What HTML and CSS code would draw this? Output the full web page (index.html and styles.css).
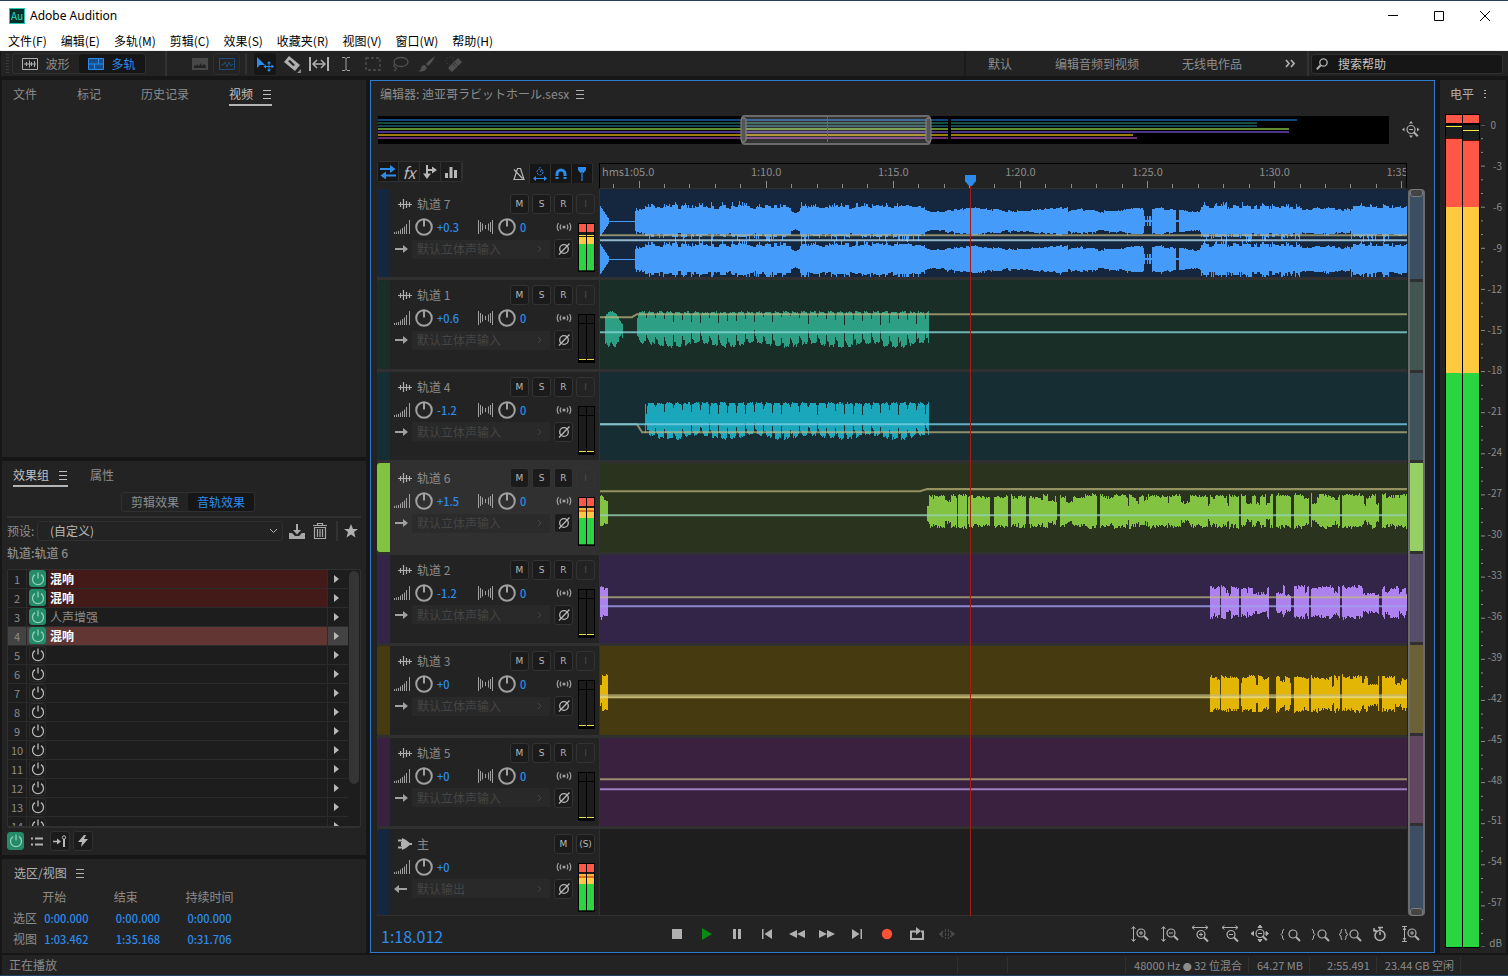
FILE: index.html
```html
<!DOCTYPE html>
<html lang="zh-CN">
<head>
    <meta charset="UTF-8">
    <meta name="viewport" content="width=device-width, initial-scale=1.0">
    <title>Adobe Audition</title>
    <link rel="stylesheet" href="styles.css">
</head>
<body>
    <svg class="sprite" aria-hidden="true">
        <symbol id="i-burger" viewBox="0 0 10 10"><path d="M1 1.500h8M1 5.500h8M1 9.500h8" stroke="currentColor" fill="none"/></symbol>
        <symbol id="i-power" viewBox="0 0 18 18"><path d="M6 4.600a5.500 5.500 0 1 0 6 0M9 2.500v6" stroke="currentColor" stroke-width="1.300" fill="none"/></symbol>
        <symbol id="i-clip" viewBox="0 0 16 12"><path d="M1 6.500h14M3.500 4v5M6.500 1v10M9.500 3v7M12.500 4v5" stroke="currentColor" stroke-width="1.200" fill="none"/></symbol>
        <symbol id="i-bus" viewBox="0 0 16 14"><path d="M1 3.500h5M1 10.500h5M8 7h7" stroke="currentColor" stroke-width="2" fill="none"/><path d="M5 1l4 2 5 4-5 4-4 2V9h-1V5h1z" fill="currentColor"/></symbol>
        <symbol id="i-volume" viewBox="0 0 17 16"><path d="M.5 13v2M2.500 12.500v2.500M4.500 12v3M6.500 10.500v4.500M8.500 9v6M10.500 7.500v7.500M12.500 5v10M15.500 1v14" stroke="currentColor" fill="none"/></symbol>
        <symbol id="i-stereo" viewBox="0 0 17 16"><path d="M1.500 1v14M3.500 3v10M5.500 4.500v7M8.500 6v4M11.500 4.500v7M13.500 3v10M15.500 1v14" stroke="currentColor" fill="none"/></symbol>
        <symbol id="i-knob" viewBox="0 0 18 18"><circle cx="9" cy="9" r="7.800" stroke="currentColor" stroke-width="2" fill="none"/><path d="M9 1.500v7" stroke="currentColor" stroke-width="2"/></symbol>
        <symbol id="i-monitor" viewBox="0 0 16 10"><circle cx="8" cy="5" r="1.600" fill="currentColor"/><path d="M5 2.500q-1.700 2.500 0 5M11 2.500q1.700 2.500 0 5M2.500 1q-2.500 4 0 8M13.500 1q2.500 4 0 8" stroke="currentColor" stroke-width="1.200" fill="none"/></symbol>
        <symbol id="i-in" viewBox="0 0 14 10"><path d="M1 5h9" stroke="currentColor" stroke-width="2"/><path d="M9 1l5 4-5 4z" fill="currentColor"/></symbol>
        <symbol id="i-out" viewBox="0 0 14 10"><path d="M4 5h9" stroke="currentColor" stroke-width="2"/><path d="M5 1L0 5l5 4z" fill="currentColor"/></symbol>
        <symbol id="i-phase" viewBox="0 0 14 14"><circle cx="7" cy="7" r="4.300" stroke="currentColor" stroke-width="1.300" fill="none"/><path d="M2 12.500L12.500 1.500" stroke="currentColor" stroke-width="1.300"/></symbol>
        <symbol id="i-more" viewBox="0 0 6 8"><path d="M1 1l3 3-3 3" stroke="currentColor" fill="none"/></symbol>
        <symbol id="i-play" viewBox="0 0 6 10"><path d="M0 1l5 4-5 4z" fill="currentColor"/></symbol>
        <symbol id="i-lens" viewBox="0 0 12 12"><circle cx="4.500" cy="4.500" r="3.700" stroke="currentColor" stroke-width="1.300" fill="none"/><path d="M7.300 7.300l3.900 3.900" stroke="currentColor" stroke-width="2"/></symbol>
        <symbol id="i-fit" viewBox="0 0 18 18"><circle cx="9" cy="8.500" r="4" stroke="currentColor" stroke-width="1.200" fill="none"/><path d="M7 8.500h4" stroke="currentColor"/><path d="M11.800 11.300l4 4" stroke="currentColor" stroke-width="2"/><path d="M9 0l2 2.500H7zM9 17l-2-2.500h4zM0 8.500l2.500-2v4zM17.500 8.500l-2.500-2v4z" fill="currentColor"/></symbol>
    </svg>

    <header class="titlebar">
        <div class="titlebar-app">
            <span class="app-logo">Au</span>
            <h1 class="app-name">Adobe Audition</h1>
        </div>
        <div class="window-buttons">
            <button aria-label="最小化"><svg width="10" height="10"><path d="M0 4.500h10" stroke="#000"/></svg></button>
            <button aria-label="最大化"><svg width="10" height="10"><path d="M.5.5h9v9h-9z" stroke="#000" fill="none"/></svg></button>
            <button aria-label="关闭"><svg width="10" height="10"><path d="M0 0l10 10M10 0L0 10" stroke="#000"/></svg></button>
        </div>
    </header>
    <nav class="menubar">
        <button>文件(F)</button>
        <button>编辑(E)</button>
        <button>多轨(M)</button>
        <button>剪辑(C)</button>
        <button>效果(S)</button>
        <button>收藏夹(R)</button>
        <button>视图(V)</button>
        <button>窗口(W)</button>
        <button>帮助(H)</button>
    </nav>

    <div class="toolbar">
        <span class="grip"></span>
        <div class="toggle mode-toggle">
            <button><svg width="16" height="12"><path d="M.5.5h15v11H.5zM2 6h12M4.500 4v4M7.500 2.500v7M9.500 4v4M12.500 3v6" stroke="currentColor" fill="none"/></svg>波形</button>
            <button class="on"><svg width="16" height="12"><path d="M.5.5h15v11H.5z" fill="#174f8c" stroke="currentColor"/><path d="M1 6h14M6.500 6v5M10.500 1v5" stroke="currentColor"/></svg>多轨</button>
        </div>
        <span class="divider mode-divider"></span>
        <div class="view-tools">
            <button class="tool dim" aria-label="频谱"><svg width="16" height="12"><path d="M0 0h16v12H0z" fill="#484848"/><path d="M2 10V7l2 1 1-2 2 2 2-3 1 3 2-2 2 2v2z" fill="#232323"/></svg></button>
            <button class="tool boxed" aria-label="音高"><svg width="16" height="12"><path d="M.5.5h15v11H.5zM2 7h2l2-3 2 5 2-5 2 4 2-2" stroke="#1f4f80" fill="none"/></svg></button>
        </div>
        <span class="divider"></span>
        <div class="edit-tools">
            <button class="tool active" aria-label="移动"><svg width="18" height="16"><path d="M1 1v11l3-3h5z" fill="#2d8ceb"/><path d="M13 6v9M8.500 10.500h9" stroke="#2d8ceb"/><path d="M13 5l2 2.500h-4zM13 16l2-2.500h-4zM7.500 10.500L10 8.500v4zM18 10.500l-2.500-2v4z" fill="#2d8ceb"/></svg></button>
            <button class="tool" aria-label="切断所选剪辑"><svg width="18" height="18"><path d="M6 1l11 9-5 6L1 7z" fill="#b0b0b0"/><path d="M5 6l2-1 5 5-2 1z" fill="#232323"/><path d="M18 18h-4l4-4z" fill="#8c8c8c"/></svg></button>
            <button class="tool" aria-label="滑动"><svg width="20" height="16"><path d="M1 1v14M19 1v14" stroke="#b0b0b0" stroke-width="2"/><path d="M4 8h12M8 4L4 8l4 4M12 4l4 4-4 4" stroke="#b0b0b0" stroke-width="1.500" fill="none"/></svg></button>
            <button class="tool" aria-label="时间选择"><svg width="10" height="16"><path d="M1 1.500h3l1 1 1-1h3M5 2v12M1 14.500h3l1-1 1 1h3" stroke="#a0a0a0" fill="none"/></svg></button>
            <button class="tool" aria-label="框选"><svg width="16" height="14"><path d="M1 1h14v12H1z" stroke="#505050" stroke-width="1.300" stroke-dasharray="3 2" fill="none"/></svg></button>
            <button class="tool" aria-label="套索"><svg width="18" height="16"><ellipse cx="10" cy="6" rx="7" ry="4.500" stroke="#505050" stroke-width="1.300" fill="none"/><path d="M4 8q-3 2 0 3t-1 4" stroke="#505050" stroke-width="1.300" fill="none"/></svg></button>
            <button class="tool" aria-label="画笔"><svg width="18" height="16"><path d="M17 0q-6 4-9 8l2 2Q15 6 17 0z" fill="#505050"/><path d="M7 9q-4 0-4 4-1 2-3 2 6 2 9-3z" fill="#505050"/></svg></button>
            <button class="tool" aria-label="污点修复"><svg width="18" height="16"><path d="M3 12L13 2l4 4L7 16z" fill="#505050"/><path d="M8 8l3 3M9 6l4 4" stroke="#232323" stroke-dasharray="1 1"/><circle cx="5" cy="5" r="4" stroke="#505050" stroke-dasharray="1 2" fill="none"/></svg></button>
        </div>
        <div class="workspaces">
            <button>默认</button>
            <button>编辑音频到视频</button>
            <button>无线电作品</button>
            <button aria-label="更多工作区"><svg width="10" height="9"><path d="M1 1l3 3.500L1 8M6 1l3 3.500L6 8" stroke="#b0b0b0" stroke-width="1.700" fill="none"/></svg></button>
        </div>
        <label class="search">
            <svg class="search-icon" width="12" height="12"><use href="#i-lens"/></svg>
            <input type="text" placeholder="搜索帮助" aria-label="搜索帮助">
        </label>
    </div>

    <main class="workspace">
        <aside class="sidebar">
            <section class="panel media">
                <div class="tabs media-tabs">
                    <button>文件</button>
                    <button>标记</button>
                    <button>历史记录</button>
                    <button class="current">视频 <svg width="10" height="10"><use href="#i-burger"/></svg></button>
                </div>
            </section>

            <section class="panel effects">
                <div class="tabs effects-tabs">
                    <button class="current">效果组 <svg width="10" height="10"><use href="#i-burger"/></svg></button>
                    <button>属性</button>
                </div>
                <div class="toggle effects-toggle">
                    <button>剪辑效果</button>
                    <button class="on">音轨效果</button>
                </div>
                <div class="preset">
                    <label for="preset">预设:</label>
                    <span class="preset-select">
                        <select id="preset"><option>(自定义)</option></select>
                        <svg width="9" height="6"><path d="M1 1l3.500 3.500L8 1" stroke="#b0b0b0" fill="none"/></svg>
                    </span>
                    <button aria-label="保存预设"><svg width="16" height="15"><path d="M0 9h3l3 3h4l3-3h3v6H0z" fill="#a8a8a8"/><path d="M8 0v8" stroke="#a8a8a8" stroke-width="2"/><path d="M4 6h8l-4 4.500z" fill="#a8a8a8"/></svg></button>
                    <button aria-label="删除预设"><svg width="14" height="16"><path d="M0 2.500h14M4.500 2V.5h5V2M1.500 4.500v11h11v-11zM4.500 6v8M7 6v8M9.500 6v8" stroke="#a8a8a8" stroke-width="1.200" fill="none"/></svg></button>
                    <span class="divider"></span>
                    <button aria-label="收藏"><svg width="14" height="14"><path d="M7 0l2 5h5l-4 3 1.500 5.500L7 10.500l-4.500 3L4 8 0 5h5z" fill="#b0b0b0"/></svg></button>
                </div>
                <p class="rack-title">轨道:轨道 6</p>
                <div class="rack">
                    <ol class="rack-slots" id="slots"></ol>
                    <div class="rack-scroll"><span class="rack-thumb"></span></div>
                </div>
                <div class="rack-buttons">
                    <button class="power on" aria-label="机架电源"><svg width="18" height="18"><use href="#i-power"/></svg></button>
                    <button class="plain" aria-label="列表"><svg width="12" height="9"><path d="M0 1.500h2M0 7.500h2M4 1.500h8M4 7.500h8" stroke="#b0b0b0" stroke-width="2"/></svg></button>
                    <button class="boxed" aria-label="前置推子"><svg width="14" height="12"><path d="M0 6.500h5" stroke="#b8b8b8" stroke-width="1.500"/><path d="M4 3.500l4 3-4 3z" fill="#b8b8b8"/><path d="M11 4v8" stroke="#b8b8b8" stroke-width="2"/><circle cx="11" cy="2.500" r="1.700" stroke="#b8b8b8" fill="none"/></svg></button>
                    <button class="boxed" aria-label="应用"><svg width="12" height="14"><path d="M7 1L1 8h4l-1 5 7-8H7l2-4z" fill="#b8b8b8"/></svg></button>
                </div>
            </section>

            <section class="panel selection">
                <h2 class="panel-title">选区/视图 <svg width="10" height="10"><use href="#i-burger"/></svg></h2>
                <table class="times">
                    <thead>
                        <tr><td></td><th>开始</th><th>结束</th><th>持续时间</th></tr>
                    </thead>
                    <tbody>
                        <tr><th>选区</th><td>0:00.000</td><td>0:00.000</td><td>0:00.000</td></tr>
                        <tr><th>视图</th><td>1:03.462</td><td>1:35.168</td><td>0:31.706</td></tr>
                    </tbody>
                </table>
            </section>
        </aside>

        <section class="panel editor">
            <h2 class="panel-title editor-title">编辑器: 迪亚哥ラビットホール.sesx <svg width="10" height="10"><use href="#i-burger"/></svg></h2>
            <div class="overview">
                <svg class="overview-map" id="overview" viewBox="0 0 1011 30" preserveAspectRatio="none"></svg>
                <button aria-label="全部缩小"><svg width="18" height="18"><use href="#i-fit"/></svg></button>
            </div>
            <div class="timeline-head">
                <div class="track-views">
                    <button class="on" aria-label="输入/输出"><svg width="16" height="14"><path d="M0 4h11M5 10.500h11" stroke="currentColor" stroke-width="2"/><path d="M10 0l5.500 4-5.500 4zM6 6.500L.5 10.500l5.500 4z" fill="currentColor"/></svg></button>
                    <button class="fx" aria-label="效果">fx</button>
                    <button aria-label="发送"><svg width="14" height="14"><path d="M4 0v10M4 5h6" stroke="currentColor" stroke-width="2"/><path d="M0 8.500h8L4 14zM9 1.500l5 3.500-5 3.500z" fill="currentColor"/></svg></button>
                    <button aria-label="EQ"><svg width="12" height="12"><path d="M1.500 7v5M6 1v11M10.500 4v8" stroke="currentColor" stroke-width="3"/></svg></button>
                </div>
                <div class="track-views snap">
                    <button class="bare" aria-label="节拍器"><svg width="12" height="14"><path d="M4.500 1.500h3l3.500 11H1zM1 2.500l8.500 9" stroke="currentColor" stroke-width="1.200" fill="none"/></svg></button>
                    <button class="on" aria-label="时间伸缩"><svg width="14" height="14"><circle cx="7" cy="5" r="3" stroke="currentColor" fill="none" stroke-dasharray="2 1"/><path d="M7 5l1.500-2M7 0v1M2 11.500h10" stroke="currentColor"/><path d="M0 11.500l3-2.500v5zM14 11.500L11 9v5z" fill="currentColor"/></svg></button>
                    <button class="on" aria-label="对齐"><svg width="12" height="12"><path d="M2 11V6a4 4 0 0 1 8 0v5" stroke="currentColor" stroke-width="3" fill="none"/><path d="M0 8.500h4M8 8.500h4" stroke="#161616"/></svg></button>
                    <button class="on" aria-label="标记"><svg width="8" height="14"><path d="M0 0h8v3L5.500 6h-3L0 3z" fill="currentColor"/><path d="M4 5v9" stroke="#1c5a99" stroke-width="2"/></svg></button>
                </div>
                <svg class="ruler" id="ruler"></svg>
            </div>
            <div class="session">
                <div class="tracks" id="tracks"></div>
                <div class="track-scroll" id="trackScroll"></div>
                <div class="playhead-area"><div class="playhead" id="playhead"><svg width="11" height="11"><path d="M0 0h11v6l-4 5H4L0 6z" fill="#2d8ceb"/></svg></div></div>
            </div>
            <div class="transport">
                <output class="clock">1:18.012</output>
                <div class="transport-buttons">
                    <button aria-label="停止"><svg width="16" height="14"><path d="M3 2h10v10H3z" fill="currentColor"/></svg></button>
                    <button class="playing" aria-label="播放"><svg width="16" height="14"><path d="M3 1l10 6-10 6z" fill="currentColor"/></svg></button>
                    <button aria-label="暂停"><svg width="16" height="14"><path d="M4 2h3v10H4zM9 2h3v10H9z" fill="currentColor"/></svg></button>
                    <button aria-label="移到上一个"><svg width="16" height="14"><path d="M3 2h1.500v10H3zM13 2v10L5.500 7z" fill="currentColor"/></svg></button>
                    <button aria-label="快退"><svg width="16" height="14"><path d="M8 3v8L0 7zM16 3v8L8 7z" fill="currentColor"/></svg></button>
                    <button aria-label="快进"><svg width="16" height="14"><path d="M0 3v8l8-4zM8 3v8l8-4z" fill="currentColor"/></svg></button>
                    <button aria-label="移到下一个"><svg width="16" height="14"><path d="M11.500 2H13v10h-1.500zM3 2v10l7.500-5z" fill="currentColor"/></svg></button>
                    <button class="record" aria-label="录制"><svg width="16" height="14"><circle cx="8" cy="7" r="5.200" fill="currentColor"/></svg></button>
                    <button aria-label="循环播放"><svg width="16" height="14"><path d="M4 4.500H2v7.500h12V4.500h-2M4 4.500h4" stroke="currentColor" stroke-width="2" fill="none"/><path d="M7 0l5 4-5 4z" fill="currentColor"/></svg></button>
                    <button class="off" aria-label="跳过所选项目"><svg width="16" height="14"><path d="M0 7h4M4 4L1 7l3 3M12 7h2M11 4l4 3-4 3" stroke="currentColor" stroke-width="1.500" fill="none"/><path d="M6.500 2v10M9.500 2v10" stroke="currentColor" stroke-dasharray="3 1"/></svg></button>
                </div>
                <div class="zoom-buttons" id="zooms"></div>
            </div>
        </section>

        <section class="panel levels">
            <h2 class="panel-title levels-title">电平 <svg width="3" height="10"><path d="M0 1.500h2M0 4.500h2M0 8.500h2" stroke="currentColor"/></svg></h2>
            <div class="level-body">
                <div class="level-bar"></div>
                <div class="level-bar right"></div>
                <svg class="level-ticks" id="levelTicks" viewBox="0 0 5 60" preserveAspectRatio="none"></svg>
                <div class="level-scale" id="levelScale"></div>
            </div>
        </section>
    </main>

    <footer class="statusbar">
        <span class="status-text">正在播放</span>
        <span class="status-cell gap"></span>
        <span class="status-cell spare"></span>
        <span class="status-cell">48000 Hz <span class="dot">●</span> 32 位混合</span>
        <span class="status-cell">64.27 MB</span>
        <span class="status-cell length">2:55.491</span>
        <span class="status-cell">23.44 GB 空闲</span>
        <span class="status-cell last"></span>
    </footer>
    <script src="script.js"></script>
</body>
</html>
```

FILE: styles.css
```css
* {
    box-sizing: border-box;
}
body {
    display: flex;
    flex-direction: column;
    height: 100vh;
    margin: 0;
    border-top: 1px solid #223f5b;
    border-bottom: 1px solid #1c3f63;
    background-color: #161616;
    color: #8c8c8c;
    font-family: "Noto Sans CJK SC", "Noto Sans", sans-serif;
    font-size: 12px;
    line-height: 16px;
    overflow: hidden;
}
button, input, select {
    margin: 0;
    padding: 0;
    border: 0;
    background: none;
    color: inherit;
    font: inherit;
}
button {
    display: flex;
    align-items: center;
    justify-content: center;
    white-space: nowrap;
}
svg {
    display: block;
    flex: none;
}
h1, h2, p, ol {
    margin: 0;
    padding: 0;
    font-size: 12px;
    font-weight: normal;
}
.sprite {
    position: absolute;
    width: 0;
    height: 0;
}

/* window title and menu */
.titlebar {
    display: flex;
    justify-content: space-between;
    height: 29px;
    flex: none;
    background-color: #fff;
    color: #000;
}
.titlebar-app {
    display: flex;
    align-items: center;
    gap: 5px;
    padding-left: 9px;
}
.app-logo {
    width: 16px;
    height: 16px;
    border: 1px solid #28c8b4;
    background-color: #04302c;
    color: #2fd9c0;
    font-size: 10px;
    line-height: 13px;
    text-align: center;
}
.app-name {
    font-family: "Noto Sans", sans-serif;
}
.window-buttons {
    display: flex;
}
.window-buttons button {
    width: 46px;
}
.menubar {
    display: flex;
    flex: none;
    gap: 14px;
    height: 21px;
    padding: 2px 0 0 8px;
    border-bottom: 1px solid #f0f0f0;
    background-color: #fff;
    color: #000;
}

/* toolbar */
.toolbar {
    display: flex;
    align-items: center;
    flex: none;
    height: 25px;
    margin-left: 1px;
    padding-left: 5px;
    background-color: #232323;
}
.grip {
    width: 3px;
    height: 20px;
    margin-right: 3px;
    background: repeating-linear-gradient(#3a3a3a 0 1px, #232323 1px 3px);
}
.divider {
    width: 2px;
    height: 20px;
    background-color: #323232;
}
.toggle {
    display: flex;
    height: 21px;
    border: 1px solid #303030;
    border-radius: 3px;
}
.toggle .on {
    border-radius: 3px;
    background-color: #161616;
    color: #2d8ceb;
}
.mode-toggle button {
    gap: 7px;
    width: 66px;
}
.mode-toggle svg {
    color: #b0b0b0;
}
.mode-toggle .on svg {
    color: #2d8ceb;
}
.mode-divider {
    height: 25px;
    margin-left: 19px;
    margin-right: 19px;
}
.view-tools, .edit-tools {
    display: flex;
    align-items: center;
}
.tool {
    width: 27px;
    height: 22px;
    border-radius: 3px;
}
.view-tools {
    margin-right: 5px;
}
.tool.boxed {
    border: 1px solid #2e2e2e;
}
.tool.active {
    width: 22px;
    margin: 0 2px 0 7px;
    background-color: #161616;
}
.workspaces {
    display: flex;
    gap: 43px;
    height: 25px;
    margin-left: auto;
    padding: 0 12px 0 22px;
    border-left: 2px solid #1b1b1b;
    border-right: 2px solid #323232;
}
.search {
    display: flex;
    align-items: center;
    gap: 10px;
    width: 192px;
    height: 20px;
    margin: 0 5px 0 2px;
    padding-left: 4px;
    border: 1px solid #303030;
    border-radius: 3px;
    background-color: #161616;
}
.search-icon {
    transform: scaleX(-1);
    color: #b0b0b0;
}
.search input {
    width: 150px;
    outline: 0;
}
.search input::placeholder {
    color: #c4c4c4;
    opacity: 1;
}

/* panels */
.workspace {
    display: flex;
    flex: 1;
    gap: 4px;
    min-height: 0;
    padding: 4px 2px 2px;
}
.panel {
    background-color: #232323;
}
.sidebar {
    display: flex;
    flex-direction: column;
    flex: none;
    gap: 4px;
    width: 364px;
}
.media {
    flex: none;
    height: 377px;
}
.tabs {
    display: flex;
    padding-left: 11px;
}
.tabs button {
    height: 26px;
    padding-top: 2px;
}
.tabs svg {
    margin-left: 9px;
}
.tabs .current {
    border-bottom: 2px solid #b4b4b4;
    padding-top: 3px;
    color: #c0c0c0;
}
.media-tabs {
    gap: 40px;
}
.effects {
    display: flex;
    flex-direction: column;
    flex: 1;
    min-height: 0;
    padding: 0 5px 3px;
}
.effects-tabs {
    gap: 22px;
    padding-left: 6px;
}
.effects-toggle {
    align-self: center;
    height: 20px;
    margin: 5px 0 0 8px;
}
.effects-toggle button {
    width: 66px;
}
.preset {
    display: grid;
    grid-template-columns: 30px 246px 28px 18px 15px 14px;
    align-items: center;
    flex: none;
    margin-top: 4px;
    padding-top: 2px;
    border-top: 2px solid #303030;
    height: 26px;
}
.preset .divider {
    justify-self: center;
}
.preset-select {
    display: flex;
    align-items: center;
    height: 20px;
    padding: 0 4px 0 12px;
    border: 1px solid #303030;
    border-radius: 3px;
    color: #b8b8b8;
}
.preset-select select {
    flex: 1;
    appearance: none;
    outline: 0;
}
.rack-title {
    margin: 3px 0 8px;
    font-weight: 500;
}
.rack {
    display: flex;
    flex: 1;
    min-height: 0;
    border: 1px solid #303030;
    border-bottom-width: 2px;
    border-radius: 3px;
    background-color: #1d1d1d;
    overflow: hidden;
}
.rack-slots {
    flex: 1;
    list-style: none;
}
.slot {
    display: grid;
    grid-template-columns: 19px 21px 1fr 21px;
    height: 19px;
    border-bottom: 1px solid #2b2b2b;
    line-height: 18px;
}
.slot-number {
    border-right: 1px solid #2b2b2b;
    font-size: 11px;
    text-align: center;
}
.power {
    width: 17px;
    height: 17px;
    margin-left: 2px;
    border: 1px solid #2b2b2b;
    border-radius: 3px;
    color: #b8b8b8;
}
.power.on {
    border-color: #258a67;
    background-color: #258a67;
    color: #8fd0b8;
}
.slot-name {
    padding-left: 2px;
}
.slot.clipped .slot-name {
    background-color: #431a17;
    color: #fff;
    font-weight: bold;
}
.slot.chosen {
    background-color: #434343;
}
.slot.chosen .slot-name {
    background-color: #613633;
}
.slot-menu {
    padding-right: 2px;
    border-left: 1px solid #2b2b2b;
    color: #b8b8b8;
}
.rack-scroll {
    width: 12px;
    padding: 1px;
}
.rack-thumb {
    display: block;
    width: 10px;
    height: 84%;
    border-radius: 5px;
    background-color: #353535;
}
.rack-buttons {
    display: flex;
    align-items: center;
    flex: none;
    gap: 3px;
    height: 22px;
    margin-top: 2px;
}
.rack-buttons .power {
    height: 18px;
    margin: 0;
}
.rack-buttons .plain {
    width: 20px;
}
.rack-buttons .boxed {
    width: 20px;
    height: 20px;
    border: 1px solid #303030;
    border-radius: 3px;
    background-color: #1b1b1b;
}
.selection {
    flex: none;
    height: 94px;
}
.panel-title {
    display: flex;
    align-items: center;
    gap: 8px;
    height: 27px;
    padding-left: 12px;
    color: #b0b0b0;
}
.times {
    border-collapse: collapse;
    margin-left: 11px;
    table-layout: fixed;
    width: 244px;
}
.times td, .times th {
    width: 71px;
    height: 21px;
    padding: 0;
    font-weight: normal;
    text-align: left;
}
.times td:first-child, .times th:first-child {
    width: 29px;
}
.times td {
    padding-left: 2px;
    color: #2d8ceb;
    font-size: 11px;
    font-weight: 500;
}

/* editor */
.editor {
    display: flex;
    flex-direction: column;
    flex: 1;
    min-width: 0;
    border: 1px solid #2f7bce;
    padding: 0 9px 0 6px;
}
.editor-title {
    gap: 6px;
    height: 26px;
    padding-left: 3px;
    color: #8c8c8c;
}
.editor-title svg {
    color: #b0b0b0;
}
.overview {
    display: flex;
    align-items: center;
    gap: 13px;
    height: 30px;
    margin: 8px 5px 16px 1px;
    color: #b0b0b0;
}
.overview-map {
    flex: 1;
    height: 30px;
    min-width: 0;
}
.timeline-head {
    display: flex;
    flex: none;
    height: 28px;
    padding-right: 18px;
}
.track-views {
    display: flex;
    height: 21px;
    border: 1px solid #303030;
    border-radius: 3px;
    color: #b8b8b8;
}
.track-views button {
    width: 21px;
    border-right: 1px solid #303030;
    background-color: #1d1d1d;
}
.track-views .on {
    background-color: #161616;
    color: #2d8ceb;
}
.track-views .fx {
    font-size: 16px;
    font-style: italic;
}
.track-views .bare {
    background: none;
}
.snap {
    margin: 2px 5px 0 auto;
    border-color: transparent;
}
.ruler {
    flex: none;
    width: calc(100% - 222px);
    height: 26px;
    margin-top: 2px;
    border: 1px solid #000;
    border-bottom: 1px solid #303030;
    fill: #8c8c8c;
}
.ruler line {
    stroke: #8c8c8c;
    shape-rendering: crispEdges;
}
.session {
    display: grid;
    grid-template-columns: 1fr 18px;
    flex: 1;
    min-height: 0;
    position: relative;
}
.tracks {
    display: flex;
    flex-direction: column;
    gap: 3px;
    min-height: 0;
    background-color: #303030;
    border-bottom: 1px solid #303030;
}
.track {
    display: grid;
    grid-template-columns: 13px 210px 1fr;
    flex: 1;
    min-height: 0;
    overflow: hidden;
}
.track.master {
    flex: 0 0 86px;
}
.track-color {
    background-color: var(--bar);
    border-radius: 3px 0 0 3px;
}
.track-header {
    padding: 5px 4px 0 4px;
    border-right: 1px solid #303030;
    background-color: #232323;
}
.track.selected .track-header {
    background-color: #303030;
}
.track-top {
    display: flex;
    align-items: center;
    gap: 3px;
    height: 20px;
}
.track-top svg {
    margin: 0 1px 0 3px;
    color: #b0b0b0;
}
.track-name {
    flex: 1;
}
.track-top button, .phase {
    flex: none;
    width: 19px;
    height: 20px;
    border: 1px solid #333;
    border-radius: 3px;
    background-color: #1b1b1b;
    color: #b8b8b8;
    font-family: "DejaVu Sans", sans-serif;
    font-size: 9px;
}
.track-top .input-off {
    background: none;
    color: #4c4c4c;
}
.track-bottom {
    display: flex;
    justify-content: space-between;
    margin-top: 2px;
}
.track-controls {
    width: 179px;
}
.track-row {
    display: flex;
    align-items: center;
    gap: 4px;
    height: 22px;
    color: #a0a0a0;
}
.track-row .volume {
    width: 36px;
    color: #2d8ceb;
    font-weight: 500;
    font-size: 11px;
}
.track-row .pan {
    flex: 1;
    color: #2d8ceb;
    font-weight: 500;
    font-size: 11px;
}
.route {
    display: flex;
    align-items: center;
    flex: 1;
    height: 19px;
    padding: 0 7px 0 5px;
    background-color: #292929;
    color: #454545;
}
.selected .route {
    background-color: #2b2b2b;
}
.route select {
    flex: 1;
    min-width: 0;
    appearance: none;
    opacity: 1;
}
.meter {
    display: flex;
    gap: 1px;
    width: 17px;
    height: 49px;
    margin-top: 7px;
    padding: 1px;
    background-color: #000;
}
.meter span {
    flex: 1;
    margin-bottom: 2px;
    border-bottom: 1px solid #eedc3c;
    background: linear-gradient(#1c1c1c 0 8px, #000 8px 9px, #1c1c1c 9px);
}
.meter.hot span, .meter.over span {
    margin-bottom: 0;
    border-bottom-color: #0a4a12;
}
.meter.hot span {
    background: linear-gradient(#ff5745 0 8px, #1c1c1c 8px 11px, #ffe04a 11px 12px, #281a00 12px 13px, #ffca3e 13px 20px, #29d641 20px);
}
.meter.over span {
    background: linear-gradient(#ff5745 0 8px, #1c1c1c 8px 10px, #ffb53c 10px 12px, #e2700e 12px 14px, #ffca3e 14px 20px, #29d641 20px);
}
.lane {
    width: 100%;
    height: 100%;
    background-color: var(--lane);
}
.lane .wave {
    fill: var(--wave);
}
.lane .volume-line {
    fill: none;
    stroke: #c2b982;
    stroke-opacity: .7;
    stroke-width: 2;
}
.lane .pan-line {
    fill: none;
    stroke: var(--pan);
    stroke-opacity: .8;
    stroke-width: 2;
}
.track-scroll {
    display: flex;
    flex-direction: column;
    gap: 3px;
    margin-left: 1px;
    border: 2px solid #6b6b6b;
    border-radius: 4px;
    background-color: #303030;
    position: relative;
}
.track-scroll span {
    flex: 1;
}
.track-scroll::before, .track-scroll::after {
    content: "";
    position: absolute;
    left: 0;
    right: 0;
    height: 6px;
    border: 1px solid #7b7b7b;
    border-radius: 3px;
    background-color: #444;
}
.track-scroll::before {
    top: -2px;
}
.track-scroll::after {
    bottom: -2px;
}
/* the playhead runs over the ruler and every lane */
.playhead-area {
    position: absolute;
    top: -14px;
    bottom: 0;
    left: 223px;
    right: 19px;
    overflow: hidden;
    pointer-events: none;
}
.playhead {
    position: absolute;
    top: 0;
    bottom: 0;
    width: 1px;
    background-color: #a81c10;
}
.playhead svg {
    margin-left: -5px;
}
.transport {
    display: flex;
    align-items: center;
    flex: none;
    height: 36px;
    padding: 0 6px 0 4px;
    color: #b0b0b0;
}
.clock {
    width: 288px;
    padding-top: 3px;
    color: #2d8ceb;
    font-size: 16px;
    line-height: 20px;
}
.transport-buttons, .zoom-buttons {
    display: flex;
    gap: 14px;
}
.zoom-buttons {
    gap: 12px;
    margin-left: auto;
}
.playing {
    color: #0b8a12;
}
.record {
    color: #ff5138;
}
.off {
    color: #4a4a4a;
}

/* output levels */
.levels {
    display: flex;
    flex-direction: column;
    flex: none;
    width: 66px;
    margin-left: 1px;
}
.levels-title {
    gap: 10px;
    padding-left: 10px;
}
.level-body {
    display: flex;
    flex: 1;
    margin: 7px 0 5px 5px;
    min-height: 0;
}
.level-bar {
    width: 18px;
    border: 1px solid #000;
    border-right: 0;
    background:
        linear-gradient(#ff5745 0 8px, #000 8px 10px, #1b1f1f 10px 11px, #f5e83c 11px 12px, #1b1f1f 12px 23px, #5a0c08 23px 24px, transparent 24px),
        linear-gradient(#ff5745 0 11%, #ffca3e 11% 31%, #29d641 31%);
}
.level-bar.right {
    width: 19px;
    border-right: 1px solid #000;
    background:
        linear-gradient(#ff5745 0 8px, #000 8px 10px, #1b1f1f 10px 15px, #f5e83c 15px 16px, #1b1f1f 16px 25px, #5a0c08 25px 26px, transparent 26px),
        linear-gradient(#ff5745 0 11%, #ffca3e 11% 31%, #29d641 31%);
}
.level-ticks {
    width: 5px;
    height: calc(100% - 12px);
    margin: 11px 1px 0;
    stroke: #8c8c8c;
}
.level-ticks line {
    vector-effect: non-scaling-stroke;
}
.level-scale {
    display: flex;
    flex-direction: column;
    flex: 1;
    margin: 4px 4px 0 0;
    font-size: 10px;
    text-align: right;
}
.level-scale span {
    flex: 1 1 0;
    height: 0;
    line-height: 14px;
}
.level-scale span:first-child {
    padding-right: 6px;
}
.level-scale .unit {
    flex: none;
    height: 12px;
}

/* status */
.statusbar {
    display: flex;
    align-items: center;
    flex: none;
    height: 20px;
    margin-left: 2px;
    background-color: #232323;
}
.status-text {
    flex: 1;
    padding-left: 7px;
}
.status-cell {
    height: 16px;
    padding: 0 6px 0 8px;
    border-left: 1px solid #303030;
    font-size: 11px;
}
.status-cell .dot {
    font-size: 9px;
}
.status-cell.gap {
    width: 50px;
}
.status-cell.spare {
    width: 118px;
}
.status-cell.length {
    padding-left: 17px;
}
.status-cell.last {
    width: 48px;
}
```

FILE: script.js
```js
// visible range of the session, in seconds
const viewStart = 63.462;
const viewEnd = 95.168;
const playTime = 78.012;

const chops = [[610, 620], [621, 639], [641, 669], [676, 691], [694, 709], [711, 740], [742, 779], [782, 807]];
const chorus = [[327, 357], [358, 367], [368, 390], [394, 408], [411, 426], [429, 457], [460, 497], [500, 639],
    [641, 673], [676, 691], [694, 709], [711, 740], [742, 779], [782, 807]];

const tracks = [
    { name: '轨道 7', volume: '+0.3', meter: 'hot', bar: '#14273f', lane: '#14273f', wave: '#459bfa', mini: '#3c4e61', pan: '#b4dcf0', volumeLine: 'M0 46H807', panLine: 'M0 51H807' },
    { name: '轨道 1', volume: '+0.6', meter: '', bar: '#1a2e28', lane: '#1a2e28', wave: '#2c9f84', mini: '#435550', pan: '#84d4d4', volumeLine: 'M0 37H32L37 34H807', panLine: 'M0 52H807', segments: [[5, 23], [37, 329]], top: 31, bottom: 68, pulse: 9 },
    { name: '轨道 4', volume: '-1.2', meter: '', bar: '#162d33', lane: '#162d33', wave: '#1aa6bb', mini: '#41535a', pan: '#78cde6', volumeLine: 'M0 52H37L42 60H807', panLine: 'M0 52H807', segments: [[45, 329]], top: 30, bottom: 68, pulse: 9 },
    { name: '轨道 6', volume: '+1.5', meter: 'over', bar: '#82c341', lane: '#29331d', wave: '#82c341', mini: '#96cf65', pan: '#96d2b4', selected: true, volumeLine: 'M0 28H320L327 26H807', panLine: 'M0 52H807', segments: [[0, 8]].concat(chorus), top: 30, bottom: 66 },
    { name: '轨道 2', volume: '-1.2', meter: '', bar: '#322548', lane: '#322548', wave: '#ae82ee', mini: '#564d69', pan: '#a0a0f0', volumeLine: 'M0 42H807', panLine: 'M0 51H807', segments: [[0, 8]].concat(chops), top: 29, bottom: 65 },
    { name: '轨道 3', volume: '+0', meter: '', bar: '#453a10', lane: '#453a10', wave: '#e3b505', mini: '#6a6136', pan: '#e6dc8c', volumeLine: 'M0 49H807', panLine: 'M0 51H807', segments: [[0, 8]].concat(chops), top: 28, bottom: 67 },
    { name: '轨道 5', volume: '+0', meter: '', bar: '#3b2140', lane: '#3b2140', wave: '#a050b0', mini: '#60475f', pan: '#b496dc', volumeLine: 'M0 41H807', panLine: 'M0 51H807' },
    { name: '主', volume: '+0', meter: 'over', bar: '#14273f', lane: '#1e1e1e', wave: '#459bfa', mini: '#3c4e61', master: true }
];

let seed = 7;
function random() {
    seed = (seed * 16807) % 2147483647;
    return seed / 2147483647;
}

function column(x, top, bottom) {
    return `M${x} ${top.toFixed(1)}h1V${bottom.toFixed(1)}h-1z`;
}

// one bar per pixel; each segment breathes a little between syllables
function voice(track) {
    let d = '';
    track.segments.forEach(([from, to]) => {
        let dip = 0;
        for (let x = from; x < to; x++) {
            if (track.pulse) {
                const phase = (x - 37 + 900) % track.pulse;
                dip = phase === 0 ? 4 + random() * 9 : phase === 1 || phase === 8 ? 2 : 0;
                if (x < 23) {
                    dip = Math.max(0, Math.abs(x - 11) - 3) * 1.5;
                }
                d += column(x, track.top + dip + random() * 1.5, track.bottom - 5 + Math.sin(x / 9) * 2 - dip * .7 + random() * 3 - (phase < 3 ? 4 : 0));
            } else {
                if (random() > .7) {
                    dip = random() > .65 ? random() * 11 : random() * 3;
                }
                d += column(x, track.top + dip + random() * 3, track.bottom - dip * .7 - random() * 4);
            }
        }
    });
    return d;
}

function music() {
    let d = '';
    let drift = 0;
    for (let x = 0; x < 807; x++) {
        let up;
        let down;
        if (x < 9) {
            up = down = 15 - x * 1.5;
        } else if (x < 35) {
            up = down = .5;
        } else if (x < 44) {
            up = 10 + random() * 3;
            down = up;
        } else {
            const loud = x < 325 || (x > 600 && x < 700) || x > 750;
            const base = loud ? 12 : 10 + Math.sin(x / 14) * 1.5;
            if (x % 3 === 0) {
                drift = random() * (loud ? 4 : 2);
            }
            up = base + drift + (random() > .75 ? random() * (loud ? 4 : 1) : 0);
            down = base + drift + (random() > .75 ? random() * (loud ? 6 : 2) : 0);
            if ((x > 190 && x < 200) || (x > 467 && x < 471)) {
                up = down = 8 + Math.abs(x - 195) / 2 % 3;
            }
            if ((x > 543 && x < 552) || (x > 575 && x < 579)) {
                up = down = random() > .5 ? 5 : 1;
            }
        }
        d += column(x, 32 - up, 32 + down);
        d += column(x, 70 - up, 70 + Math.min(down, 18));
    }
    return d;
}

function laneSvg(track, index) {
    const wave = index === 0 ? music() : track.segments ? voice(track) : '';
    return `<svg class="lane" viewBox="0 0 807 88" preserveAspectRatio="none">
        <path class="wave" shape-rendering="crispEdges" d="${wave}"/>
        ${track.master ? '' : `<path class="volume-line" d="${track.volumeLine}"/><path class="pan-line" d="${track.panLine}"/>`}
    </svg>`;
}

const use = (id, w, h) => `<svg width="${w}" height="${h}"><use href="#${id}"/></svg>`;

function trackRow(track, index) {
    const route = track.master ? '默认输出' : '默认立体声输入';
    const buttons = track.master
        ? '<button>M</button><button>(S)</button>'
        : '<button>M</button><button>S</button><button>R</button><button class="input-off">I</button>';
    const pan = track.master
        ? '<span class="pan"></span>'
        : `${use('i-stereo', 17, 16)}${use('i-knob', 18, 18)}<span class="pan">0</span>`;
    return `<div class="track ${track.selected ? 'selected' : ''} ${track.master ? 'master' : ''}" style="--bar:${track.bar};--lane:${track.lane};--wave:${track.wave};--pan:${track.pan}">
        <div class="track-color"></div>
        <div class="track-header">
            <div class="track-top">${track.master ? use('i-bus', 16, 14) : use('i-clip', 16, 12)}<span class="track-name">${track.name}</span>${buttons}</div>
            <div class="track-bottom">
                <div class="track-controls">
                    <div class="track-row">${use('i-volume', 17, 16)}${use('i-knob', 18, 18)}<span class="volume">${track.volume}</span>${pan}${use('i-monitor', 18, 10)}</div>
                    <div class="track-row">${use(track.master ? 'i-out' : 'i-in', 14, 10)}
                        <span class="route"><select aria-label="${track.name} 路由"><option>${route}</option></select>${use('i-more', 6, 8)}</span>
                        <button class="phase" aria-label="反相">${use('i-phase', 14, 14)}</button>
                    </div>
                </div>
                <div class="meter ${track.meter}"><span></span><span></span></div>
            </div>
        </div>
        ${laneSvg(track, index)}
    </div>`;
}
document.getElementById('tracks').innerHTML = tracks.map(trackRow).join('');
document.getElementById('trackScroll').innerHTML = tracks.map(t => `<span style="background:${t.mini}"></span>`).join('');

// ruler
const percent = t => (t - viewStart) / (viewEnd - viewStart) * 100;
let marks = '<text x="2" y="12" font-size="11">hms</text>';
for (let t = 64; t <= viewEnd; t++) {
    const major = t % 5 === 0;
    marks += `<line x1="${percent(t)}%" x2="${percent(t)}%" y1="${major ? 17 : 20}" y2="25"/>`;
    if (major) {
        marks += `<text x="${percent(t)}%" y="12" font-size="11" text-anchor="middle">1:${String(t - 60).padStart(2, '0')}.0</text>`;
    }
}
document.getElementById('ruler').innerHTML = marks;

document.getElementById('playhead').style.left = percent(playTime) + '%';

// overview strip
const strips = [['#15447d', 919], ['#194c41', 879], ['#15454f', 879], ['#618b2f', 911], ['#4e3488', 911], ['#9d7b0b', 755], ['#6d2f74', 759]];
document.getElementById('overview').innerHTML = '<path d="M0 1h1011v28H0z"/>'
    + strips.map(([color, end], i) => `<path d="M0 ${4 + i * 3}h${end}v2H0z" fill="${color}"/>`).join('')
    + `<path d="M570 3h3v25h-3z"/>
       <rect x="364" y="1" width="188" height="28" rx="3" fill="#fff" fill-opacity=".2" stroke="#6b6b6b" stroke-width="2"/>
       <path d="M449.500 2v25" stroke="#e03428" shape-rendering="crispEdges"/>
       <rect x="363" y="3" width="5" height="24" rx="2" fill="#555" stroke="#888"/>
       <rect x="548" y="3" width="5" height="24" rx="2" fill="#555" stroke="#888"/>`;

// effects rack
const effects = ['混响', '混响', '人声增强', '混响'];
let slots = '';
for (let i = 0; i < 14; i++) {
    const name = effects[i] || '';
    const clipped = name === '混响' ? 'clipped' : '';
    slots += `<li class="slot ${clipped} ${i === 3 ? 'chosen' : ''}">
        <span class="slot-number">${i + 1}</span>
        <button class="power ${name ? 'on' : ''}" aria-label="效果 ${i + 1} 电源">${use('i-power', 18, 18)}</button>
        <span class="slot-name">${name}</span>
        <button class="slot-menu" aria-label="效果 ${i + 1} 菜单">${use('i-play', 6, 10)}</button>
    </li>`;
}
document.getElementById('slots').innerHTML = slots;

// zoom buttons
const lens = (x, y, sign) => `<circle cx="${x}" cy="${y}" r="4" stroke-width="1.200"/><path d="M${x + 3} ${y + 3}l4 4" stroke-width="2"/>`
    + (sign ? `<path d="M${x - 2} ${y}h4"/>` : '') + (sign === '+' ? `<path d="M${x} ${y - 2}v4"/>` : '');
const vertical = '<path d="M2.500 2v14M.5 4l2-2.500 2 2.500M.5 14l2 2.500 2-2.500"/>';
const horizontal = '<path d="M1 2.500h16M3.500.5L1 2.500l2.500 2M14.500.5l2.500 2-2.500 2"/>';
const zooms = [
    ['放大振幅', vertical + lens(10, 8, '+')],
    ['缩小振幅', vertical + lens(10, 8, '-')],
    ['放大时间', horizontal + lens(10, 9.5, '+')],
    ['缩小时间', horizontal + lens(10, 9.5, '-')],
    ['全部缩小', '<use href="#i-fit"/>'],
    ['放大入点', '<path d="M3 4L1.500 6v2L0 9.500 1.500 11v2L3 15"/>' + lens(12, 9)],
    ['放大出点', '<path d="M1 4l1.500 2v2L4 9.500 2.500 11v2L1 15"/>' + lens(11, 9)],
    ['缩放至选区', '<path d="M1 4L0 6v2L-2 9.500 0 11v2l1 2M4 4l1 2v2l2 1.500L5 11v2l-1 2"/>' + lens(13, 9)],
    ['缩放至时间', '<circle cx="9" cy="10.500" r="5" stroke-width="1.500"/><path d="M9 10V7M9 5V2M7 2.500h5M3 5l2 1M3 3v3h3" stroke-width="1.500"/>'],
    ['缩放所选轨道', '<path d="M3.500 2v14M1 1.500h5M1 16.500h5M2 5l1.500-2L5 5M2 13l1.500 2L5 13"/>' + lens(11, 8, '+')]
];
document.getElementById('zooms').innerHTML = zooms.map(([label, shape]) =>
    `<button aria-label="${label}"><svg width="18" height="18" fill="none" stroke="currentColor" overflow="visible">${shape}</svg></button>`).join('');

// level scale, 0 to -60 dB
let ticks = '';
let labels = '';
for (let db = 0; db <= 60; db++) {
    ticks += `<line x1="0" x2="${db % 3 === 0 ? 4 : 2}" y1="${db}" y2="${db}"/>`;
    if (db % 3 === 0 && db < 60) {
        labels += `<span>${db ? '-' + db : 0}</span>`;
    }
}
document.getElementById('levelTicks').innerHTML = ticks;
document.getElementById('levelScale').innerHTML = labels + '<span class="unit">dB</span>';
```
